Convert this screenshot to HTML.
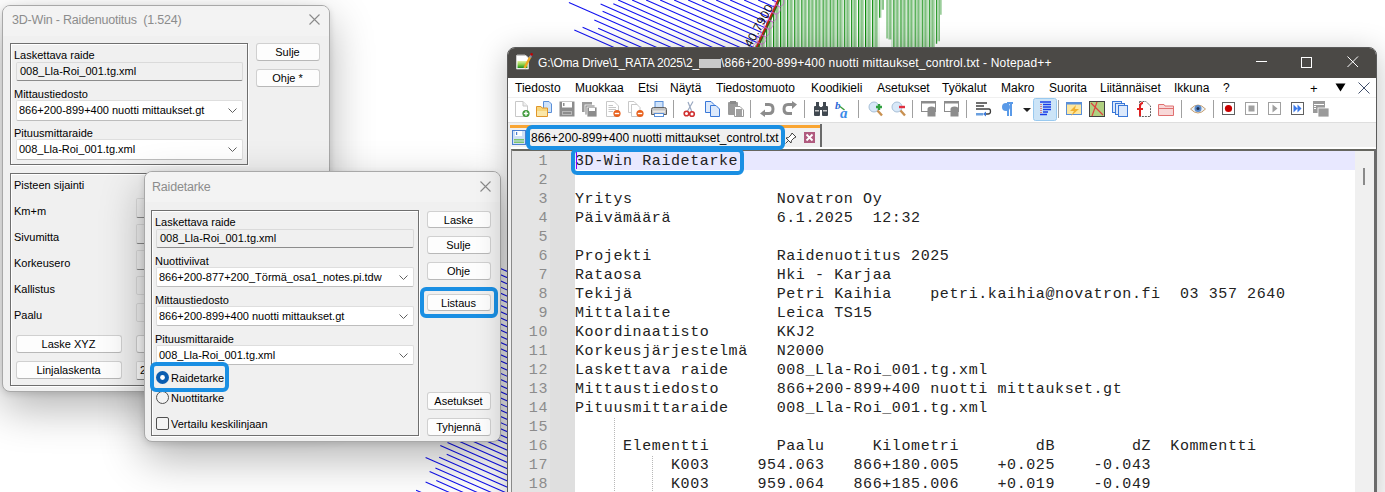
<!DOCTYPE html>
<html><head><meta charset="utf-8">
<style>
*{box-sizing:border-box}
html,body{margin:0;padding:0}
body{width:1385px;height:492px;overflow:hidden;position:relative;background:#fff;font-family:"Liberation Sans",sans-serif;font-size:11px;color:#000}
.a{position:absolute}
.mn span{position:absolute;top:0}
.dlg{position:absolute;background:#f0f0f0;border:1px solid #a8a8a8;border-radius:8px;box-shadow:0 2px 6px rgba(0,0,0,.12),0 16px 44px rgba(0,0,0,.30)}
.ttl{position:absolute;font-size:12.5px;letter-spacing:-0.2px;color:#8c8c8c;white-space:pre}
.gb{position:absolute;border:1px solid #6f6f6f;box-shadow:inset 1px 1px 0 #fff,1px 1px 0 #fff}
.lbl{position:absolute;white-space:pre;line-height:12px}
.ro{position:absolute;background:#f0f0f0;border:1px solid #dadada;border-bottom-color:#8c8c8c;border-radius:2px;white-space:pre;line-height:16px;padding-left:3px}
.cb{position:absolute;background:#fff;border:1px solid #dedede;border-bottom-color:#bdbdbd;border-radius:2px;white-space:pre;line-height:18px;padding-left:2px}
.chev{position:absolute;right:5px;top:7px;width:9px;height:5px}
.btn{position:absolute;background:#fdfdfd;border:1px solid #d0d0d0;border-bottom-color:#b8b8b8;border-radius:3px;text-align:center;white-space:pre;line-height:16px;text-indent:-1px}
.hl{position:absolute;border:4px solid #1a8fe3;border-radius:6px}
</style></head><body>

<!-- bg -->
<svg class="a" style="left:0;top:0" width="1385" height="492" viewBox="0 0 1385 492">
<defs><pattern id="gp" x="773" y="0" width="7.08" height="10" patternUnits="userSpaceOnUse"><rect x="0" y="0" width="7.08" height="10" fill="#fff"/><rect x="0" y="0" width="1.2" height="10" fill="#0a8a0a"/><rect x="2" y="0" width="4" height="10" fill="#a6d3a6"/><rect x="3.3" y="0" width="0.9" height="10" fill="#6ab86a"/></pattern>
<clipPath id="gc"><path d="M778 0H879.1V60H748Z"/><rect x="879.1" y="0" width="2.4" height="17.8"/><rect x="881.5" y="0" width="2.5" height="9.7"/><rect x="886.5" y="0" width="1.5" height="38.6"/><rect x="888" y="0" width="3.5" height="39.6"/><rect x="891.5" y="0" width="43.5" height="60"/><rect x="935" y="0" width="2.5" height="43.7"/><rect x="937.5" y="0" width="2.5" height="41.2"/><rect x="940" y="0" width="2" height="14.7"/></clipPath></defs>
<path d="M574.3 30.0L730.1 98.6M582.6 27.3L732.6 93.3M598.2 28.3L734.9 88.5M594.3 20.0L737.5 83.0M568.9 2.4L740.1 77.7M602.6 11.2L742.5 72.7M600.6 4.1L744.9 67.6M613.3 3.7L747.3 62.7M618.1 0.0L749.6 57.9M632.1 0.0L752.1 52.8M646.1 0.0L754.5 47.7M660.1 0.0L756.9 42.6M674.1 0.0L759.4 37.5M688.1 0.0L761.8 32.4M702.1 0.0L764.3 27.4M716.1 0.0L766.7 22.3M730.1 0.0L769.2 17.2M744.1 0.0L771.6 12.1M758.1 0.0L774.0 7.0M772.1 0.0L776.5 1.9M416.1 490.2L520.1 535.9M425.6 482.0L525.0 525.8M436.3 480.6L527.5 520.7M429.6 471.5L529.9 515.6M435.4 467.9L532.4 510.5M425.6 457.4L534.8 505.4M439.2 457.2L537.2 500.3M446.7 454.3L539.7 495.3M440.3 445.4L542.1 490.2M447.5 442.4L544.6 485.1M447.7 436.3L547.0 480.0M435.0 424.6L549.4 474.9M453.6 426.6L551.9 469.8M451.5 419.5L554.3 464.7M446.5 411.1L556.8 459.7M441.9 403.0L559.2 454.6M463.8 406.4L561.6 449.5M456.3 397.0L564.1 444.4M464.1 394.3L566.5 439.3M469.9 390.6L569.0 434.2M467.9 383.6L571.4 429.1M474.7 380.4L573.9 424.1M464.0 369.6L576.3 419.0M475.7 368.5L578.7 413.9M469.1 359.5L581.2 408.8M482.8 359.3L583.6 403.7M483.3 353.4L586.1 398.6M466.5 339.8L588.5 393.5M469.3 334.9L590.9 388.5M473.2 330.5L593.4 383.4M493.0 333.1L595.8 378.3M482.3 322.1L598.3 373.2M488.7 318.8L600.7 368.1M482.8 310.1L603.1 363.0M489.7 306.9L605.6 357.9M488.7 300.3L608.0 352.9M489.8 294.7L610.5 347.8M497.3 291.8L612.9 342.7M492.6 283.6L615.4 337.6M492.4 277.3L617.8 332.5M492.1 271.0L620.2 327.4M497.0 267.0L622.7 322.3M513.5 268.1L625.1 317.2M517.9 263.9L627.6 312.2M518.4 258.0L630.0 307.1M512.2 249.1L632.4 302.0M517.6 245.3L634.9 296.9M507.5 234.7L637.3 291.8M524.3 235.9L639.8 286.7M520.0 227.9L642.2 281.6M515.0 219.5L644.7 276.6M511.6 211.9L647.1 271.5M532.5 214.9L649.5 266.4M537.7 211.0L652.0 261.3M517.9 196.2L654.4 256.2M536.9 198.4L656.9 251.1M529.5 188.9L659.3 246.0M525.2 180.9L661.7 241.0M530.5 177.1L664.2 235.9M543.8 176.8L666.6 230.8M548.2 172.5L669.1 225.7M530.3 158.5L671.5 220.6M545.9 159.2L673.9 215.5M534.1 147.8L676.4 210.4M552.2 149.6L678.8 205.4M544.8 140.2L681.3 200.3M559.9 140.7L683.7 195.2M564.2 136.5L686.2 190.1M554.7 126.1L688.6 185.0M568.5 126.0L691.0 179.9M553.9 113.4L693.5 174.8M550.2 105.6L695.9 169.8M564.7 105.8L698.4 164.7M552.9 94.5L700.8 159.6M558.8 91.0L703.2 154.5M565.8 87.9L705.7 149.4M572.6 84.7L708.1 144.3M563.6 74.6L710.6 139.2M562.8 68.1L713.0 134.2M584.5 71.5L715.4 129.1M573.1 60.3L717.9 124.0M590.5 61.8L720.3 118.9M590.9 55.8L722.8 113.8M587.2 48.0L725.2 108.7M601.2 48.0L727.7 103.6" stroke="#1414f0" stroke-width="1.1" fill="none"/>
<rect x="720" y="0" width="240" height="60" fill="url(#gp)" clip-path="url(#gc)"/>
<path d="M779.5 -2L753 56" stroke="#d01818" stroke-width="2.6"/><path d="M780.5 -2L754 56" stroke="#2a6a1a" stroke-width="1.2"/>
<circle cx="779.4" cy="2.0" r="4.5" fill="none" stroke="#d050d0" stroke-width="0.9" opacity="0.75"/>
<circle cx="775.8" cy="9.5" r="4.5" fill="none" stroke="#d050d0" stroke-width="0.9" opacity="0.75"/>
<circle cx="772.2" cy="17.0" r="4.5" fill="none" stroke="#d050d0" stroke-width="0.9" opacity="0.75"/>
<circle cx="768.6" cy="24.5" r="4.5" fill="none" stroke="#d050d0" stroke-width="0.9" opacity="0.75"/>
<circle cx="765.0" cy="32.0" r="4.5" fill="none" stroke="#d050d0" stroke-width="0.9" opacity="0.75"/>
<circle cx="761.4" cy="39.5" r="4.5" fill="none" stroke="#d050d0" stroke-width="0.9" opacity="0.75"/>
<circle cx="757.8" cy="47.0" r="4.5" fill="none" stroke="#d050d0" stroke-width="0.9" opacity="0.75"/>
<text x="0" y="0" transform="translate(751,48) rotate(-61)" font-family="Liberation Sans" font-size="12" letter-spacing="0.5" fill="#101010">40.7900</text>
</svg>
<!-- Dialog 1 -->
<div class="dlg" style="left:2px;top:5px;width:328px;height:387px;overflow:hidden"><div class="a" style="left:0;top:0;width:100%;height:30px;background:#f3f3f3"></div></div>
<div class="ttl" style="left:12px;top:13px">3D-Win - Raidenuotitus  (1.524)</div>
<svg class="a" style="left:309px;top:14px" width="11" height="11"><path d="M0.5 0.5L10.5 10.5M10.5 0.5L0.5 10.5" stroke="#8a8a8a" stroke-width="1.1"/></svg>
<div class="gb" style="left:10px;top:43px;width:238px;height:122px"></div>
<div class="lbl" style="left:14px;top:49px">Laskettava raide</div>
<div class="ro" style="left:16px;top:62px;width:227px;height:19px">008_Lla-Roi_001.tg.xml</div>
<div class="lbl" style="left:14px;top:88px">Mittaustiedosto</div>
<div class="cb" style="left:16px;top:100px;width:227px;height:21px">866+200-899+400 nuotti mittaukset.gt<svg class="chev" viewBox="0 0 9 5"><path d="M0.5 0.5L4.5 4.5L8.5 0.5" fill="none" stroke="#606060"/></svg></div>
<div class="lbl" style="left:14px;top:127px">Pituusmittaraide</div>
<div class="cb" style="left:16px;top:139px;width:227px;height:21px">008_Lla-Roi_001.tg.xml<svg class="chev" viewBox="0 0 9 5"><path d="M0.5 0.5L4.5 4.5L8.5 0.5" fill="none" stroke="#606060"/></svg></div>
<div class="btn" style="left:256px;top:43px;width:64px;height:18px">Sulje</div>
<div class="btn" style="left:256px;top:69px;width:64px;height:18px">Ohje *</div>
<div class="gb" style="left:10px;top:173px;width:200px;height:213px"></div>
<div class="lbl" style="left:14px;top:179px">Pisteen sijainti</div>
<div class="lbl" style="left:14px;top:205px">Km+m</div>
<div class="lbl" style="left:14px;top:231px">Sivumitta</div>
<div class="lbl" style="left:14px;top:257px">Korkeusero</div>
<div class="lbl" style="left:14px;top:283px">Kallistus</div>
<div class="lbl" style="left:14px;top:309px">Paalu</div>
<div class="ro" style="left:136px;top:198px;width:40px;height:20px"></div>
<div class="ro" style="left:136px;top:224px;width:40px;height:20px"></div>
<div class="ro" style="left:136px;top:250px;width:40px;height:20px"></div>
<div class="ro" style="left:136px;top:276px;width:40px;height:19px;border-bottom-color:#dadada"></div>
<div class="ro" style="left:136px;top:303px;width:40px;height:19px;border-bottom-color:#dadada"></div>
<div class="btn" style="left:16px;top:335px;width:106px;height:18px">Laske XYZ</div>
<div class="btn" style="left:136px;top:335px;width:40px;height:18px"></div>
<div class="btn" style="left:16px;top:361px;width:106px;height:18px">Linjalaskenta</div>
<div class="ro" style="left:136px;top:361px;width:40px;height:19px;background:#fff">2</div>

<!-- Dialog 2 -->
<div class="dlg" style="left:144px;top:171px;width:357px;height:271px;overflow:hidden"><div class="a" style="left:0;top:0;width:100%;height:30px;background:#f3f3f3"></div></div>
<div class="ttl" style="left:152px;top:180px">Raidetarke</div>
<svg class="a" style="left:480px;top:181px" width="11" height="11"><path d="M0.5 0.5L10.5 10.5M10.5 0.5L0.5 10.5" stroke="#8a8a8a" stroke-width="1.1"/></svg>
<div class="gb" style="left:151px;top:210px;width:268px;height:226px"></div>
<div class="lbl" style="left:155px;top:216px">Laskettava raide</div>
<div class="ro" style="left:156px;top:229px;width:258px;height:19px">008_Lla-Roi_001.tg.xml</div>
<div class="lbl" style="left:155px;top:255px">Nuottiviivat</div>
<div class="cb" style="left:156px;top:267px;width:258px;height:20px">866+200-877+200_Törmä_osa1_notes.pi.tdw<svg class="chev" viewBox="0 0 9 5"><path d="M0.5 0.5L4.5 4.5L8.5 0.5" fill="none" stroke="#606060"/></svg></div>
<div class="lbl" style="left:155px;top:294px">Mittaustiedosto</div>
<div class="cb" style="left:156px;top:306px;width:258px;height:20px">866+200-899+400 nuotti mittaukset.gt<svg class="chev" viewBox="0 0 9 5"><path d="M0.5 0.5L4.5 4.5L8.5 0.5" fill="none" stroke="#606060"/></svg></div>
<div class="lbl" style="left:155px;top:333px">Pituusmittaraide</div>
<div class="cb" style="left:156px;top:345px;width:258px;height:20px">008_Lla-Roi_001.tg.xml<svg class="chev" viewBox="0 0 9 5"><path d="M0.5 0.5L4.5 4.5L8.5 0.5" fill="none" stroke="#606060"/></svg></div>
<svg class="a" style="left:156px;top:371px" width="14" height="14"><circle cx="6.5" cy="6.5" r="6.5" fill="#0a5cb0"/><circle cx="6.5" cy="6.5" r="2.4" fill="#fff"/></svg>
<div class="lbl" style="left:171px;top:372px">Raidetarke</div>
<svg class="a" style="left:156px;top:391px" width="14" height="14"><circle cx="6.5" cy="6.5" r="6" fill="#f3f3f3" stroke="#505050"/></svg>
<div class="lbl" style="left:171px;top:392px">Nuottitarke</div>
<div class="a" style="left:156px;top:417px;width:13px;height:13px;border:1px solid #505050;border-radius:2px;background:#f3f3f3"></div>
<div class="lbl" style="left:171px;top:418px">Vertailu keskilinjaan</div>
<div class="btn" style="left:427px;top:211px;width:64px;height:17px">Laske</div>
<div class="btn" style="left:427px;top:236px;width:64px;height:18px">Sulje</div>
<div class="btn" style="left:427px;top:262px;width:64px;height:18px">Ohje</div>
<div class="btn" style="left:427px;top:294px;width:64px;height:17px">Listaus</div>
<div class="btn" style="left:427px;top:392px;width:64px;height:18px">Asetukset</div>
<div class="btn" style="left:427px;top:418px;width:64px;height:18px">Tyhjennä</div>
<div class="hl" style="left:420px;top:287px;width:78px;height:31px"></div>
<div class="hl" style="left:150px;top:362px;width:79px;height:30px"></div>

<!-- Notepad++ -->
<div class="a" style="left:507px;top:47px;width:870px;height:460px;background:#f0f0f0;border:1px solid #5a5a5a;border-radius:8px 8px 0 0;box-shadow:0 6px 30px rgba(0,0,0,.25);overflow:hidden">
 <div class="a" style="left:0;top:0;width:868px;height:30px;background:#4b4946"></div>
 <div class="a" style="left:0;top:30px;width:868px;height:19px;background:#fff"></div>
 <div class="a" style="left:0;top:49px;width:868px;height:26px;background:#fff;border-top:1px solid #f0f0f0;border-bottom:1px solid #dedede"></div>
</div>
<div class="a" style="left:538px;top:56px;font-size:12px;color:#fff;white-space:pre;line-height:14px"><span style="letter-spacing:-0.2px">G:\Oma Drive\1_RATA 2025\2_</span><span style="display:inline-block;width:22px;height:9px;background:#c9c9c9;vertical-align:-1px"></span><span style="letter-spacing:0.17px">\866+200-899+400 nuotti mittaukset_control.txt - Notepad++</span></div>
<svg class="a" style="left:516px;top:53px" width="17" height="17" viewBox="0 0 17 17"><defs><linearGradient id="ng" x1="0" y1="0" x2="0" y2="1"><stop offset="0" stop-color="#e4f0a0"/><stop offset="0.5" stop-color="#8ed04a"/><stop offset="1" stop-color="#1a8a1a"/></linearGradient></defs><path d="M0.5 2.5H10L12.5 5V16H0.5Z" fill="#fff" stroke="#d8d8d8" stroke-width="0.8"/><path d="M2 1V3M4 1V3M6 1V3M8 1V3" stroke="#c0c0c0" stroke-width="0.9"/><rect x="1.5" y="8" width="10" height="7" fill="url(#ng)"/><path d="M8.5 15L14.5 3.5" stroke="#f0a820" stroke-width="2.4"/><path d="M14 4.5L15.5 1.8" stroke="#8090b0" stroke-width="2"/><circle cx="15.6" cy="1.4" r="1.3" fill="#c00000"/></svg>
<svg class="a" style="left:1256px;top:61px" width="12" height="2"><rect width="11" height="1" fill="#fff"/></svg>
<svg class="a" style="left:1301px;top:57px" width="12" height="12"><rect x="0.5" y="0.5" width="10" height="10" fill="none" stroke="#fff"/></svg>
<svg class="a" style="left:1347px;top:56px" width="12" height="12"><path d="M0.5 0.5L11 11M11 0.5L0.5 11" stroke="#fff" stroke-width="1"/></svg>

<div class="a mn" style="left:507px;top:79px;width:870px;height:19px;font-size:12px;line-height:19px;white-space:pre;color:#000"><span class="a" style="left:8px">Tiedosto</span><span class="a" style="left:68px">Muokkaa</span><span class="a" style="left:131px">Etsi</span><span class="a" style="left:163px">Näytä</span><span class="a" style="left:209px">Tiedostomuoto</span><span class="a" style="left:304px">Koodikieli</span><span class="a" style="left:370px">Asetukset</span><span class="a" style="left:435px">Työkalut</span><span class="a" style="left:494px">Makro</span><span class="a" style="left:542px">Suorita</span><span class="a" style="left:593px">Liitännäiset</span><span class="a" style="left:667px">Ikkuna</span><span class="a" style="left:716px">?</span><span class="a" style="left:803px;font-size:13px">+</span>
</div>

<!-- toolbar -->
<svg class="a" style="left:507px;top:97px" width="870" height="25" viewBox="0 0 870 25">
<rect x="526.5" y="1.5" width="23" height="22" rx="2" fill="#cce4f7" stroke="#99c9ef"/>
<path d="M166.5 3V21" stroke="#a0a0a0"/>
<path d="M243.5 3V21" stroke="#a0a0a0"/>
<path d="M297.5 3V21" stroke="#a0a0a0"/>
<path d="M351.5 3V21" stroke="#a0a0a0"/>
<path d="M405.5 3V21" stroke="#a0a0a0"/>
<path d="M459.5 3V21" stroke="#a0a0a0"/>
<path d="M551.5 3V21" stroke="#a0a0a0"/>
<path d="M674.5 3V21" stroke="#a0a0a0"/>
<path d="M706.5 3V21" stroke="#a0a0a0"/>
<g transform="translate(7,4)"><path d="M1.5 0.5H9L13.5 5V15.5H1.5Z" fill="#fff" stroke="#c8c8c8"/><path d="M9 0.5V5H13.5" fill="#eee" stroke="#c8c8c8"/><circle cx="12" cy="12.5" r="3.6" fill="#3f9a3a"/><path d="M12 10.3V14.7M9.8 12.5H14.2" stroke="#fff" stroke-width="1.4"/></g>
<g transform="translate(29,4)"><path d="M7.5 0.5H13L15.5 3V11.5H7.5Z" fill="#cfe3fb" stroke="#5a8fd8"/><path d="M0.5 5.5H5L6 7H11.5V15.5H0.5Z" fill="#f7d57a" stroke="#e0962a"/><rect x="1" y="10" width="10" height="5" fill="#fbe7a8"/></g>
<g transform="translate(52,4)"><path d="M0.5 0.5H15.5V15.5H0.5Z" fill="#8c8c8c"/><rect x="3" y="1" width="10" height="5.5" fill="#fff"/><rect x="4" y="2" width="1.5" height="3" fill="#8c8c8c"/><rect x="3" y="10" width="10" height="4" fill="#b8b8b8"/><rect x="4" y="11" width="8" height="2" fill="#8c8c8c"/></g>
<g transform="translate(75,4)"><rect x="0" y="1" width="10" height="10" fill="#9a9a9a"/><rect x="3" y="4" width="10" height="10" fill="#8c8c8c" stroke="#fff" stroke-width="0.8"/><rect x="5" y="6" width="10" height="10" fill="#8c8c8c" stroke="#fff" stroke-width="0.8"/><rect x="7" y="7" width="6" height="3" fill="#fff"/></g>
<g transform="translate(98,4)"><path d="M1.5 0.5H9L13.5 5V15.5H1.5Z" fill="#fff" stroke="#c8c8c8"/><path d="M3.5 4.5H8M3.5 6.5H11M3.5 8.5H11M3.5 10.5H8" stroke="#a0a0a0" stroke-width="0.6"/><circle cx="12" cy="12.5" r="3.6" fill="#e8601c"/><path d="M9.8 12.5H14.2" stroke="#fff" stroke-width="1.4"/></g>
<g transform="translate(121,4)"><path d="M0.5 0.5H6L9 3.5V11.5H0.5Z" fill="#fff" stroke="#c8c8c8"/><path d="M3.5 3.5H9L12 6.5V15.5H3.5Z" fill="#fff" stroke="#c8c8c8"/><circle cx="12" cy="12.5" r="3.6" fill="#e8601c"/><path d="M9.8 12.5H14.2" stroke="#fff" stroke-width="1.4"/></g>
<g transform="translate(144,4)"><rect x="4" y="0.5" width="8" height="7" fill="#cfe3fb" stroke="#5a8fd8"/><path d="M0.5 8.5Q0.5 6.5 2.5 6.5H13.5Q15.5 6.5 15.5 8.5V13.5H0.5Z" fill="#c4c4c4" stroke="#606060"/><rect x="2" y="9.5" width="12" height="2" fill="#e8e8e8"/><rect x="3.5" y="12.5" width="9" height="3" fill="#fff" stroke="#5a8fd8"/></g>
<g transform="translate(176,4)"><path d="M4 11L10 0.5M9 11L5 1" stroke="#9aa8c0" stroke-width="1.2"/><circle cx="3.5" cy="12.5" r="2.3" fill="none" stroke="#d03030" stroke-width="1.6"/><circle cx="9" cy="13" r="2.3" fill="none" stroke="#d03030" stroke-width="1.6"/></g>
<g transform="translate(198,4)"><path d="M0.5 0.5H6L9 3.5V11.5H0.5Z" fill="#dce9fb" stroke="#3a78d8"/><path d="M5.5 4.5H11L14.5 8V15.5H5.5Z" fill="#dce9fb" stroke="#3a78d8"/></g>
<g transform="translate(221,4)"><rect x="0" y="1" width="10" height="13" rx="1" fill="#9a9a9a"/><rect x="2" y="0" width="6" height="3" fill="#8a8a8a"/><path d="M6.5 5.5H12L15.5 9V15.5H6.5Z" fill="#fff" stroke="#9a9a9a"/><rect x="8" y="8" width="6" height="7" fill="#a0a0a0"/></g>
<g transform="translate(252,4)"><path d="M6 3.5H10Q14 3.5 14 8Q14 12.5 10 12.5H6" fill="none" stroke="#8c8c8c" stroke-width="3"/><path d="M1 12.5L6 8.5V16Z" fill="#8c8c8c"/></g>
<g transform="translate(275,4)"><path d="M10 3.5H6Q2 3.5 2 8Q2 12.5 6 12.5H10" fill="none" stroke="#8c8c8c" stroke-width="3"/><path d="M15 3.5L10 0V8Z" fill="#8c8c8c"/></g>
<g transform="translate(306,4)"><rect x="1" y="5" width="6" height="10" rx="1" fill="#404850"/><rect x="9" y="5" width="6" height="10" rx="1" fill="#404850"/><rect x="3" y="1" width="3" height="5" fill="#404850"/><rect x="10" y="1" width="3" height="5" fill="#404850"/><rect x="6" y="6" width="4" height="3" fill="#404850"/><rect x="2" y="9" width="4" height="1.5" fill="#c8c8c8"/><rect x="10" y="9" width="4" height="1.5" fill="#c8c8c8"/></g>
<g transform="translate(329,4)"><text x="-1" y="8" font-family="Liberation Serif" font-style="italic" font-weight="bold" font-size="11" fill="#2a68d8">b</text><text x="4" y="16.5" font-family="Liberation Serif" font-style="italic" font-weight="bold" font-size="15" fill="#3a8ae8">a</text><path d="M4 5.5L8.5 9" stroke="#3a9a3a" stroke-width="1.4"/></g>
<g transform="translate(361,4)"><circle cx="6" cy="6" r="5" fill="#d8e8f8" stroke="#a8c0d8"/><path d="M9.5 9.5L14 14.5" stroke="#c89050" stroke-width="2.4"/><path d="M11 3V9M8 6H14" stroke="#30a040" stroke-width="2.4"/></g>
<g transform="translate(384,4)"><circle cx="6" cy="6" r="5" fill="#d8e8f8" stroke="#a8c0d8"/><path d="M9.5 9.5L14 14.5" stroke="#c89050" stroke-width="2.4"/><path d="M8 6H14" stroke="#e03040" stroke-width="2.4"/></g>
<g transform="translate(414,4)"><rect x="0.5" y="0.5" width="14" height="10" fill="#fff" stroke="#8c8c8c"/><rect x="0.5" y="0.5" width="14" height="2" fill="#8c8c8c"/><path d="M6.5 8Q6.5 5.5 10.5 5.5Q14.5 5.5 14.5 8V15.5H6.5Z" fill="#8c8c8c"/></g>
<g transform="translate(437,4)"><rect x="0.5" y="0.5" width="14" height="10" fill="#fff" stroke="#8c8c8c"/><rect x="0.5" y="0.5" width="14" height="2" fill="#8c8c8c"/><path d="M6.5 8Q6.5 5.5 10.5 5.5Q14.5 5.5 14.5 8V15.5H6.5Z" fill="#8c8c8c"/></g>
<g transform="translate(468,4)"><path d="M1 2H12M1 5H9M1 8H14Q15.5 8 15.5 10.5Q15.5 13 13 13H10" fill="none" stroke="#404040" stroke-width="1.3"/><rect x="1" y="12" width="7" height="2.5" fill="#6aa0e0"/><path d="M8 13L11 10.5V15.5Z" fill="#3a78d8"/></g>
<g transform="translate(492,4)"><path d="M8 2H14M12 2V15M9 2V15" stroke="#5a9ae8" stroke-width="2"/><circle cx="7" cy="6" r="4" fill="#5a9ae8"/></g>
<g transform="translate(516,11)"><path d="M0 0H8L4 4Z" fill="#202020"/></g>
<g transform="translate(530,4)"><path d="M3 1H14M6 3.5H14M6 6H14M6 8.5H14M6 11H11M3 13.5H10" stroke="#1a3ce8" stroke-width="1.6"/><path d="M4 3V12" stroke="#e02020" stroke-width="1" stroke-dasharray="1 1"/></g>
<g transform="translate(559,4)"><rect x="0.5" y="1.5" width="15" height="12" fill="#fde7a0" stroke="#5a8fd8"/><rect x="0.5" y="1.5" width="15" height="2" fill="#5a8fd8"/><path d="M10 4L4 10H8L5 15L13 8H9Z" fill="#f0b030"/></g>
<g transform="translate(582,4)"><rect x="0.5" y="0.5" width="15" height="15" fill="#b0d080" stroke="#404040"/><path d="M2 2L14 14M8 1L3 15" stroke="#e04040" stroke-width="1.2"/></g>
<g transform="translate(605,4)"><rect x="0.5" y="0.5" width="9" height="11" fill="#dce9fb" stroke="#3a78d8"/><rect x="3.5" y="2.5" width="9" height="11" fill="#dce9fb" stroke="#3a78d8"/><rect x="6.5" y="4.5" width="9" height="11" fill="#dce9fb" stroke="#3a78d8"/></g>
<g transform="translate(628,4)"><path d="M4.5 0.5H11L15.5 5V15.5H4.5Z" fill="#fff" stroke="#606060" stroke-dasharray="2 1"/><path d="M8 2Q5 2 5 6V15M2 8H8" fill="none" stroke="#e02020" stroke-width="2"/></g>
<g transform="translate(651,4)"><path d="M0.5 3.5H6L7 5H15.5V14.5H0.5Z" fill="#f8d8d8" stroke="#e07070"/><rect x="1" y="7" width="14" height="1" fill="#e07070"/></g>
<g transform="translate(683,4)"><path d="M0.5 8Q8 0 15.5 8Q8 16 0.5 8Z" fill="#e8f0f8" stroke="#c8a070"/><circle cx="8" cy="7.5" r="3.5" fill="#5a8ac8"/><circle cx="8" cy="7.5" r="1.5" fill="#203050"/></g>
<g transform="translate(715,4)"><rect x="0.5" y="1.5" width="12" height="12" fill="#fff" stroke="#606060"/><circle cx="6.5" cy="7.5" r="3.6" fill="#c80000"/></g>
<g transform="translate(738,4)"><rect x="0.5" y="1.5" width="12" height="12" fill="#fff" stroke="#a0a0a0"/><rect x="3.5" y="4.5" width="6" height="6" fill="#a0a0a0"/></g>
<g transform="translate(761,4)"><rect x="0.5" y="1.5" width="12" height="12" fill="#fff" stroke="#a0a0a0"/><path d="M4.5 3.5L9.5 7.5L4.5 11.5Z" fill="#a0a0a0"/></g>
<g transform="translate(784,4)"><rect x="0.5" y="1.5" width="12" height="12" fill="#fff" stroke="#606060"/><path d="M2.5 3.5L6.5 7.5L2.5 11.5ZM6.5 3.5L10.5 7.5L6.5 11.5Z" fill="#3a78e8"/></g>
<g transform="translate(806,4)"><rect x="0" y="0" width="12" height="12" fill="#9a9a9a"/><rect x="1" y="3" width="10" height="1" fill="#fff"/><rect x="1" y="5" width="2" height="1" fill="#fff"/><rect x="1" y="7" width="2" height="1" fill="#fff"/><rect x="5" y="7" width="11" height="9" fill="#9a9a9a" stroke="#fff" stroke-width="0.8"/></g>
</svg>
<svg class="a" style="left:1335px;top:83px" width="11" height="9"><path d="M0.5 0.5H10.5L5.5 8.5Z" fill="#000"/></svg>
<svg class="a" style="left:1358px;top:82px" width="12" height="12"><path d="M0.5 0.5L11.5 11.5M11.5 0.5L0.5 11.5" stroke="#2a3a5a" stroke-width="0.9"/></svg>
<!-- tab bar -->
<div class="a" style="left:510px;top:125px;width:311px;height:3px;background:#f9a533"></div>
<div class="a" style="left:820px;top:124px;width:2px;height:25px;background:#6a6a6a"></div>

<!-- editor -->
<div class="a" style="left:511px;top:147px;width:865px;height:2px;background:#fff"></div><div class="a" style="left:511px;top:149px;width:865px;height:343px;background:#fff;border-top:2px solid #666660;border-left:2px solid #8a8a8a"></div>
<div class="a" style="left:512px;top:151px;width:38px;height:341px;background:#e4e4e4"></div>
<div class="a" style="left:550px;top:151px;width:25px;height:341px;background:#dfdfdf"></div>
<div class="a" style="left:575px;top:151px;width:780px;height:19px;background:#e8e8ff"></div>
<div class="a" style="left:1355px;top:151px;width:19px;height:341px;background:#f0f0f0"></div>
<div class="a" style="left:1374px;top:149px;width:3px;height:343px;background:#6a6a6a"></div>
<div class="a" style="left:1363px;top:168px;width:2px;height:17px;background:#8a8a8a"></div>
<pre class="a" style="margin:0;left:512px;top:152px;width:36px;text-align:right;font-family:'Liberation Mono',monospace;font-size:15px;letter-spacing:0.6px;line-height:19px;color:#8c8c8c">1
2
3
4
5
6
7
8
9
10
11
12
13
14
15
16
17
18</pre>
<pre class="a" style="margin:0;left:575px;top:152px;font-family:'Liberation Mono',monospace;font-size:15px;letter-spacing:0.6px;line-height:19px;color:#222">3D-Win Raidetarke

Yritys               Novatron Oy
Päivämäärä           6.1.2025  12:32

Projekti             Raidenuotitus 2025
Rataosa              Hki - Karjaa
Tekijä               Petri Kaihia    petri.kaihia@novatron.fi  03 357 2640
Mittalaite           Leica TS15
Koordinaatisto       KKJ2
Korkeusjärjestelmä   N2000
Laskettava raide     008_Lla-Roi_001.tg.xml
Mittaustiedosto      866+200-899+400 nuotti mittaukset.gt
Pituusmittaraide     008_Lla-Roi_001.tg.xml

     Elementti       Paalu     Kilometri        dB        dZ  Kommentti
          K003     954.063   866+180.005    +0.025    -0.043
          K003     959.064   866+185.006    +0.019    -0.049</pre>
<div class="a" style="left:576px;top:152px;width:1px;height:17px;background:#8000ff"></div>
<svg class="a" style="left:512px;top:130px" width="14" height="15" viewBox="0 0 14 15"><rect x="0.5" y="0.5" width="13" height="14" fill="#cfe0f5" stroke="#4a7fd0"/><rect x="3" y="1" width="7" height="5" fill="#fff"/><rect x="4" y="2" width="1.2" height="3" fill="#4a7fd0"/><rect x="2" y="9" width="10" height="1.5" fill="#7ec46a"/><rect x="2" y="11.5" width="10" height="1.5" fill="#7ec46a"/></svg>
<svg class="a" style="left:785px;top:132px" width="12" height="12" viewBox="0 0 12 12"><path d="M7 1L11 5L9 6L6.5 8.5L6 11L1 6L3.5 5.5L6 3Z" fill="#fff" stroke="#303030" stroke-width="0.9"/><path d="M3.5 8.5L0.5 11.5" stroke="#303030" stroke-width="0.9"/></svg>
<svg class="a" style="left:804px;top:132px" width="11" height="11" viewBox="0 0 11 11"><rect width="11" height="11" fill="#b05a7e"/><path d="M2.5 2.5L8.5 8.5M8.5 2.5L2.5 8.5" stroke="#fff" stroke-width="1.8"/></svg>
<div class="a" style="left:614px;top:418px;width:1px;height:74px;background:repeating-linear-gradient(#b8b8b8 0 1px,transparent 1px 2px)"></div>
<div class="a" style="left:652px;top:456px;width:1px;height:36px;background:repeating-linear-gradient(#b8b8b8 0 1px,transparent 1px 2px)"></div>
<div class="hl" style="left:571px;top:148px;width:173px;height:27px"></div>
<div class="hl" style="left:526px;top:125px;width:259px;height:25px"></div>
<div class="a" style="left:531px;top:131px;font-size:12px;line-height:14px;white-space:pre">866+200-899+400 nuotti mittaukset_control.txt</div>

</body></html>
